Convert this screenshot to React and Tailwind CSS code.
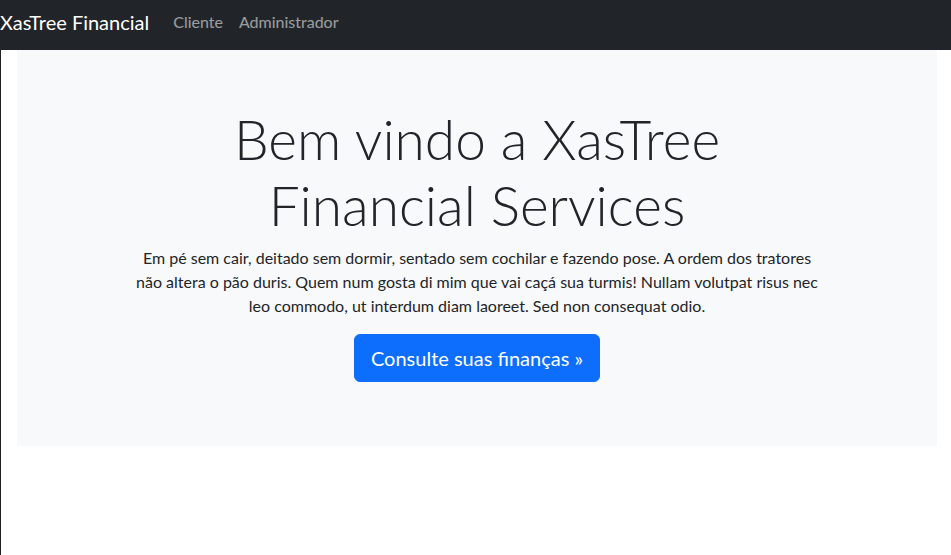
import React from 'react'

const font = { fontFamily: 'Lato, "Open Sans", "Liberation Sans", sans-serif' }

function Navbar() {
    return (
        <nav className="h-[50px] bg-[#212529] flex items-center pb-[6px]">
            <a href="#" className="text-[20px] text-white mr-4 leading-[30px]">XasTree Financial</a>
            <ul className="flex">
                <li><a href="#" className="px-2 text-[16px] text-white/55 leading-6">Cliente</a></li>
                <li><a href="#" className="px-2 text-[16px] text-white/55 leading-6">Administrador</a></li>
            </ul>
        </nav>
    )
}

function Hero() {
    return (
        <section className="ml-4 mr-[14px] bg-[#f8f9fa] pt-[56px] pb-[48px] text-center text-[#212529]">
            <h1 className="text-[55px] font-light leading-[66px] mb-2">
                <span className="block whitespace-nowrap">Bem vindo a XasTree</span>
                <span className="block whitespace-nowrap">Financial Services</span>
            </h1>
            <p className="text-[16px] leading-6 mb-4">
                <span className="block whitespace-nowrap">Em pé sem cair, deitado sem dormir, sentado sem cochilar e fazendo pose. A ordem dos tratores</span>
                <span className="block whitespace-nowrap">não altera o pão duris. Quem num gosta di mim que vai caçá sua turmis! Nullam volutpat risus nec</span>
                <span className="block whitespace-nowrap">leo commodo, ut interdum diam laoreet. Sed non consequat odio.</span>
            </p>
            <p className="mb-4">
                <a href="#" className="inline-block bg-[#0d6efd] text-white text-[20px] leading-[30px] px-4 py-2 rounded-[6px] border border-[#0d6efd]">
                    Consulte suas finanças »
                </a>
            </p>
        </section>
    )
}

export default function App() {
    return (
        <div style={font} className="min-h-[555px] bg-white">
            <Navbar />
            <div className="border-l border-[#222] min-h-[505px]">
                <Hero />
            </div>
        </div>
    )
}
